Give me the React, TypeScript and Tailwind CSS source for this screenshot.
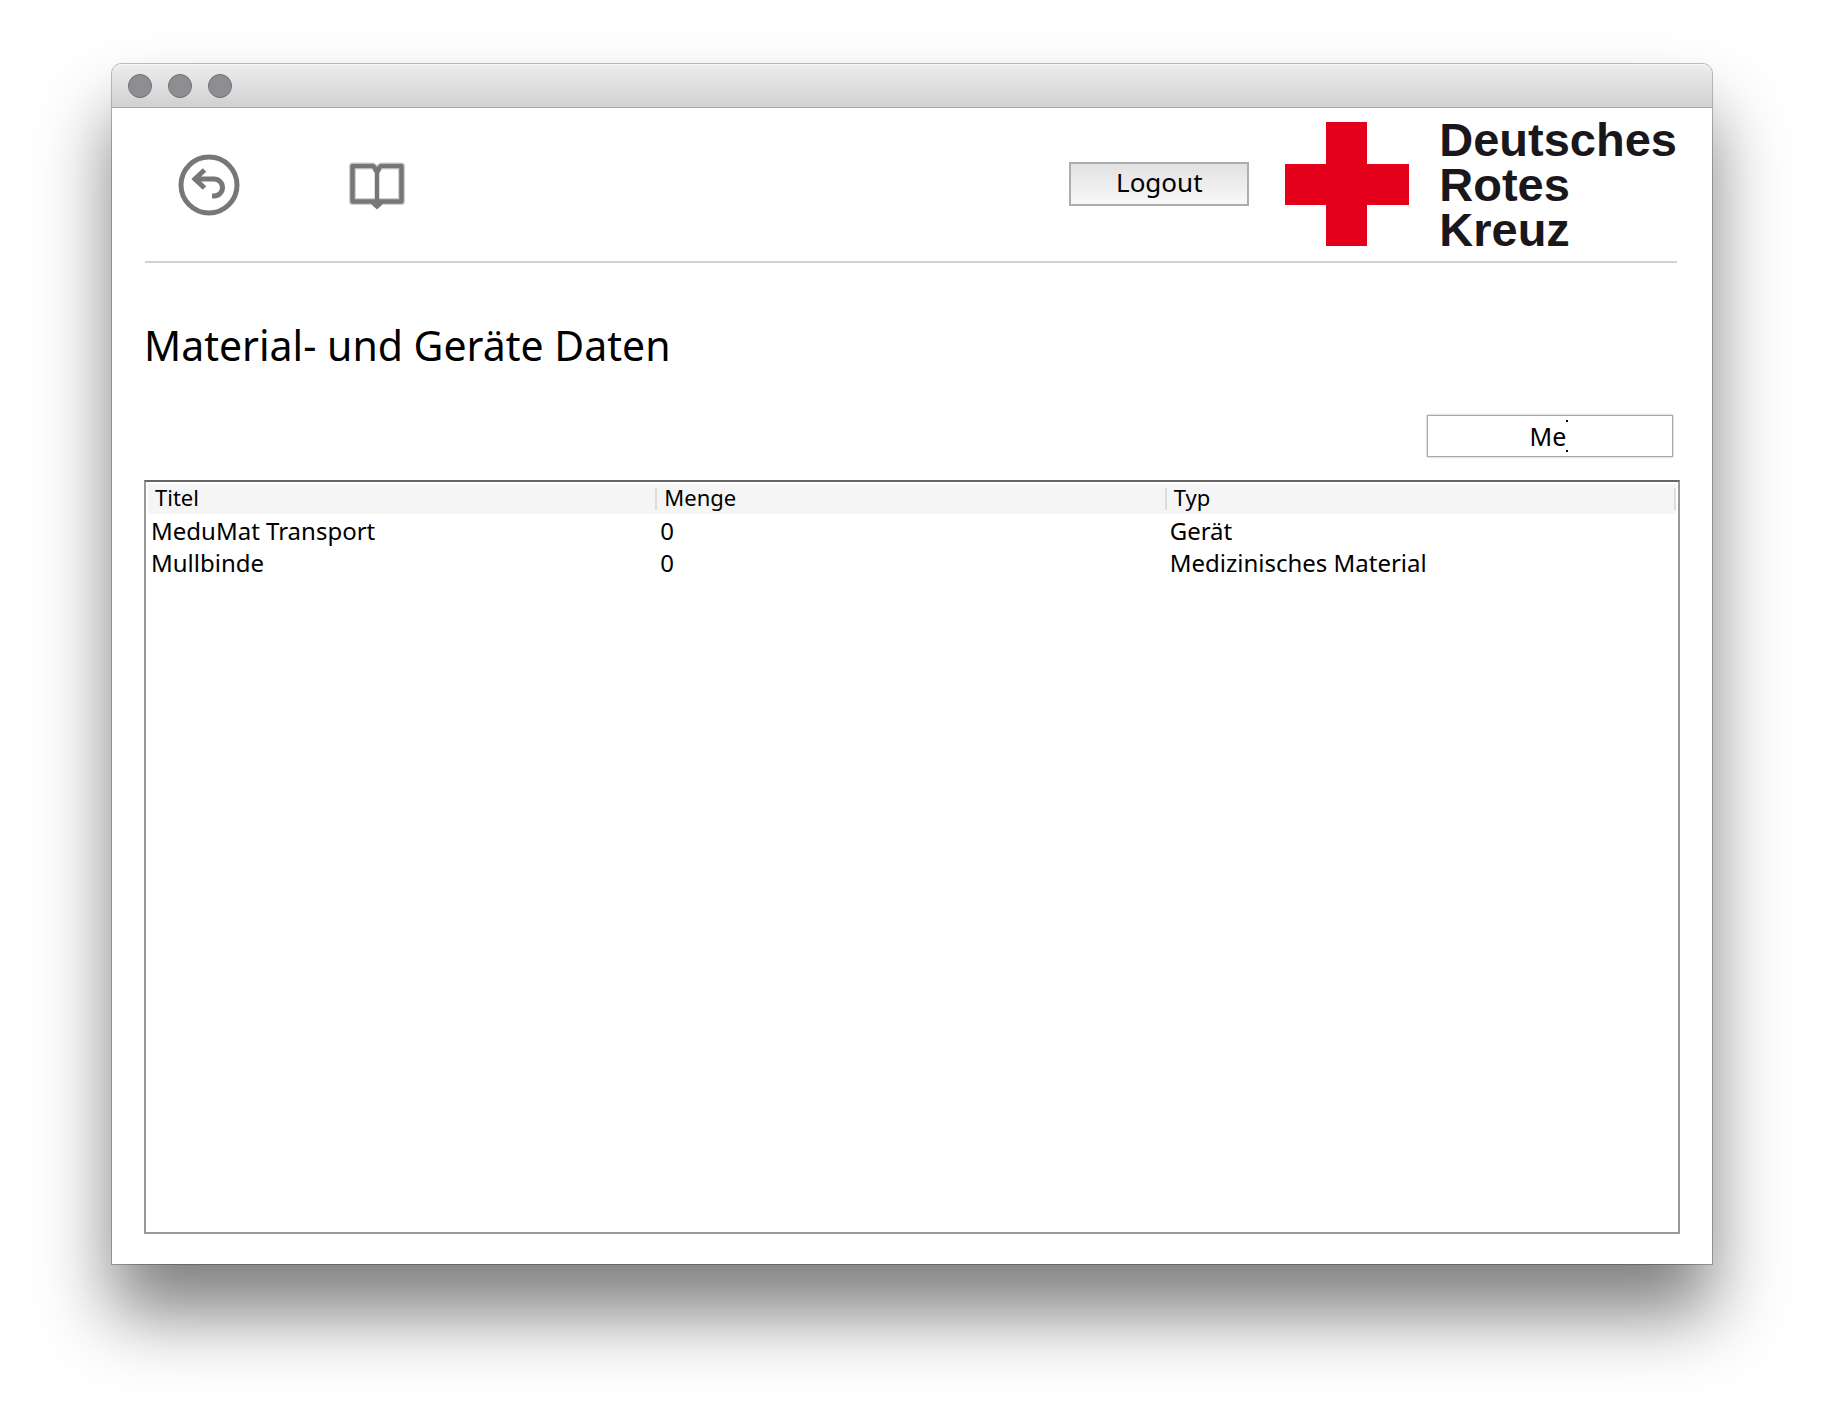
import { useState } from "react";

const items = [
  { title: "MeduMat Transport", amount: 0, type: "Gerät" },
  { title: "Mullbinde", amount: 0, type: "Medizinisches Material" },
];

const columns = ["Titel", "Menge", "Typ"];

function TitleBar() {
  return (
    <div className="flex h-11 items-center gap-4 rounded-t-[10px] border-b border-[#a9a9a9] bg-linear-to-b from-[#ededed] to-[#d1d1d1] px-4 shadow-[inset_0_1px_0_#f6f6f6]">
      {["Schließen", "Minimieren", "Maximieren"].map((label) => (
        <button
          key={label}
          aria-label={label}
          className="size-6 rounded-full border border-[#6f6e73] bg-[#8e8d92]"
        />
      ))}
    </div>
  );
}

function BackIcon() {
  return (
    <svg width="64" height="64" viewBox="0 0 64 64" fill="none" stroke="#777" strokeWidth="5">
      <circle cx="32" cy="32" r="28" />
      <path d="M20 26h17a8.5 8.5 0 0 1 0 17h-2" />
      <path d="M27.5 17 18 26l9.500 9" />
      <path d="M15 26l9-8v16z" fill="#777" stroke="none" />
    </svg>
  );
}

function BookIcon() {
  return (
    <svg width="56" height="48" viewBox="0 0 56 48" fill="none" stroke="#777">
      <path d="M3.500 5H24l4 4 4-4h20.500v35.500h-49z" strokeOpacity="0.35" strokeWidth="7" strokeLinejoin="round" />
      <path d="M28 44V9l-4-4H3.500v35.500h49V5H32l-4 4" strokeWidth="4.500" strokeLinejoin="round" />
      <path d="M24 3l4 4 4-4v6l-2 3h-4l-2-3zM22 41h12l-1 3-5 4.500-5-4.500z" fill="#777" stroke="none" />
    </svg>
  );
}

function Logo() {
  return (
    <div className="flex items-start gap-[30px]">
      <svg width="124" height="124" viewBox="0 0 124 124" role="img" aria-label="Rotes Kreuz">
        <path d="M41 0h41v42h42v41H82v41H41V83H0V42h41z" fill="#e2001a" />
      </svg>
      <div className="-mt-[5px] font-['Liberation_Sans',Arial,sans-serif] text-[47px] leading-[45px] font-bold text-[#1a171b]">
        Deutsches
        <br />
        Rotes
        <br />
        Kreuz
      </div>
    </div>
  );
}

export default function App() {
  const [query, setQuery] = useState("Me");

  return (
    <div className="flex min-h-screen flex-col bg-white px-28 pt-16 pb-40 font-['Noto_Sans',sans-serif] text-black">
      <div className="flex flex-1 flex-col rounded-t-[10px] bg-white shadow-[0_0_0_1px_rgba(0,0,0,0.25),0_50px_72px_rgba(0,0,0,0.5)]">
        <TitleBar />
        <main className="flex flex-1 flex-col px-8 pt-[14px] pb-[30px]">
          <header className="mr-[3px] ml-px flex h-[141px] items-start border-b-2 border-[#d3d3d3]">
            <nav className="flex items-center gap-[108px] pt-[31px] pl-8">
              <button aria-label="Zurück">
                <BackIcon />
              </button>
              <button aria-label="Katalog">
                <BookIcon />
              </button>
            </nav>
            <div className="ml-auto flex items-start gap-9">
              <button className="mt-10 h-11 w-[180px] border-2 border-[#adadad] bg-linear-to-b from-[#e2e2e2] to-[#f8f8f8] pb-1 text-[26px] leading-9">
                Logout
              </button>
              <Logo />
            </div>
          </header>
          <h1 className="mt-[54px] text-[41px] leading-[56px]">Material- und Geräte Daten</h1>
          <div className="relative mt-[42px] mr-[7px] w-[246px] self-end">
            <input
              aria-label="Suche"
              value={query}
              onChange={(event) => setQuery(event.target.value)}
              className="block h-[42px] w-full border border-[#a8a8a8] bg-white pr-1 text-center text-[25px] shadow-[0_0_2px_#aaa] outline-none"
            />
            <span className="pointer-events-none absolute top-[5px] left-[139px] flex h-8 flex-col justify-between">
              <span className="size-0.5 bg-black" />
              <span className="size-0.5 bg-black" />
            </span>
          </div>
          <div className="mt-[23px] flex-1 border-2 border-[#999] border-t-[#666] px-0.5 pt-0.5">
            <table className="w-full table-fixed border-collapse text-left">
              <thead>
                <tr className="h-[30px] bg-[#f5f5f5]">
                  {columns.map((column) => (
                    <th key={column} className="p-0 text-[22px] font-normal">
                      <div className="flex h-[22px] items-center border-r-2 border-[#dcdcdc] pb-1 pl-[7px]">
                        {column}
                      </div>
                    </th>
                  ))}
                </tr>
              </thead>
              <tbody>
                {items.map((item) => (
                  <tr key={item.title} className="h-8 text-[24px] leading-[30px]">
                    <td className="p-0 pt-0.5 pl-[3px]">{item.title}</td>
                    <td className="p-0 pt-0.5 pl-[3px]">{item.amount}</td>
                    <td className="p-0 pt-0.5 pl-[3px]">{item.type}</td>
                  </tr>
                ))}
              </tbody>
            </table>
          </div>
        </main>
      </div>
    </div>
  );
}
